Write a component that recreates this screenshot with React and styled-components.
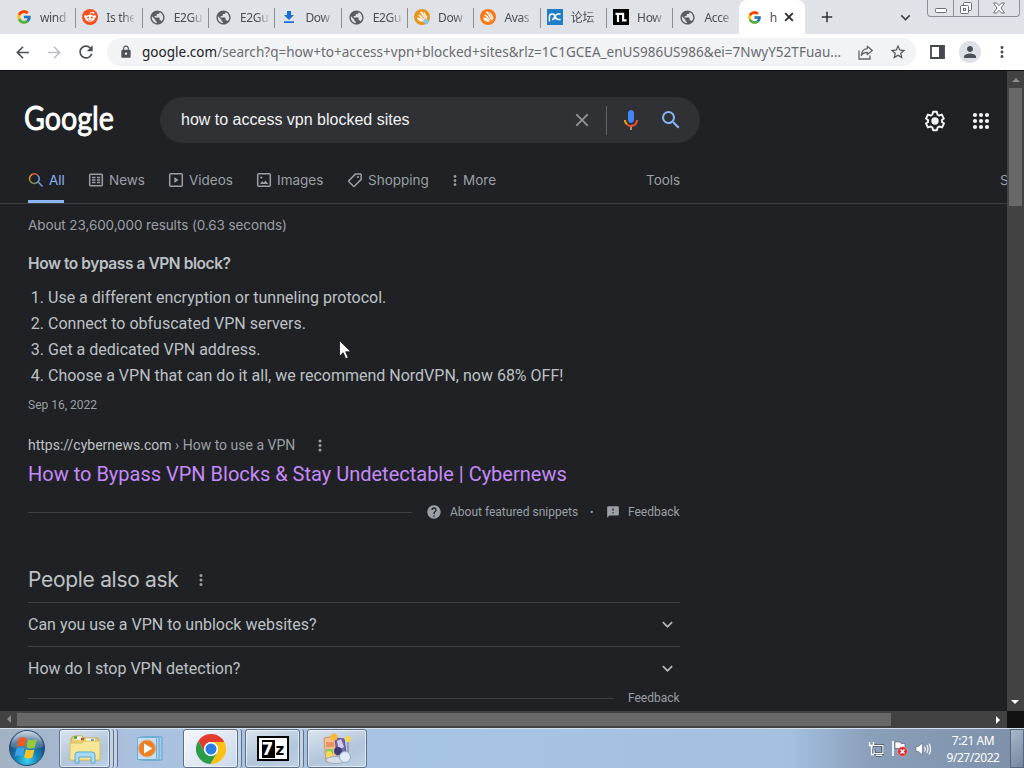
import React from 'react';
import styled, { createGlobalStyle } from 'styled-components';
import { FcGoogle } from 'react-icons/fc';
import {
  MdArrowBack,
  MdArrowForward,
  MdRefresh,
  MdLock,
  MdStarBorder,
  MdPerson,
  MdMoreVert,
  MdPublic,
  MdClose,
  MdAdd,
  MdSearch,
  MdHelp,
  MdFeedback,
  MdKeyboardArrowDown,
} from 'react-icons/md';

const GlobalStyle = createGlobalStyle`
  * {
    box-sizing: border-box;
  }
  body {
    margin: 0;
    overflow: hidden;
    background: #202124;
  }
  svg {
    display: block;
    flex: none;
  }
  h2, h3, p, ol {
    margin: 0;
    padding: 0;
    font-weight: 400;
  }
`;

const segoe = `'Noto Sans', 'Open Sans', 'Noto Sans CJK SC', sans-serif`;
const product = `Inter, Roboto, sans-serif`;

/* ---------- icons ---------- */

const RedditIcon = () => (
  <svg width='16' height='16' viewBox='0 0 16 16'>
    <circle cx='8' cy='8' r='8' fill='#f4511e' />
    <circle cx='3.3' cy='7.6' r='1.3' fill='#fff' />
    <circle cx='12.7' cy='7.6' r='1.3' fill='#fff' />
    <ellipse cx='8' cy='9.2' rx='4.8' ry='3.5' fill='#fff' />
    <path d='M8 6l.7-2.8 2.6.6' fill='none' stroke='#fff' strokeWidth='0.8' />
    <circle cx='11.4' cy='3.8' r='1' fill='#fff' />
    <circle cx='6.1' cy='8.6' r='1' fill='#f4511e' />
    <circle cx='9.9' cy='8.6' r='1' fill='#f4511e' />
    <path d='M6 10.8q2 1.3 4 0' fill='none' stroke='#f4511e' strokeWidth='0.7' />
  </svg>
);

const DownloadIcon = () => (
  <svg width='16' height='16' viewBox='0 0 16 16' fill='#1a6fd6'>
    <path d='M6 2h4v4h3L8 11 3 6h3zM3 12.2h10v1.9H3z' />
  </svg>
);

const AvastIcon = ({ muted }) => (
  <svg width='16' height='16' viewBox='0 0 16 16'>
    <circle cx='8' cy='8' r='8' fill={muted ? '#e8961e' : '#f77a1c'} />
    <path
      d='M6.3 3.2c1.3-.9 2.3.2 2.7 1.5l2.6 6.2c-2-3.2-3.5-5.5-5.3-7.7zM4.6 6.1c1-.5 1.8.2 2.500 1l3.300 4C8 9.800 6 8.200 4.600 6.100zM3.500 8.800c2 .2 4.400 1.500 6.300 3.400-2.600.500-6-.200-6.300-3.400zM10 3.500l2.800 4.200-.5 3.600z'
      fill='#fff'
      stroke='#fff'
      strokeWidth='0.6'
    />
    {muted && <path d='M8.500 13l3-4 4 3.500-2.500 3z' fill='#8fc6e8' />}
  </svg>
);

const ForumIcon = () => (
  <svg width='16' height='16' viewBox='0 0 16 16'>
    <path d='M0 0h16v16H0z' fill='#1e7fc8' />
    <g fill='none' stroke='#fff' strokeWidth='1.500'>
      <path d='M2.400 12.500V7.700a2.700 2.700 0 1 1 2.700 2.700c2.800 0 2.600-5.400 5.800-5.400h2.700' />
      <path d='M13.600 10.400h-2.500a2.700 2.700 0 0 1-2.400-2.700' />
    </g>
  </svg>
);

const NIcon = () => (
  <svg width='16' height='16' viewBox='0 0 16 16'>
    <path d='M0 0h16v16H0z' fill='#000' />
    <path
      d='M2.500 4.900h7.600v6.500h3.400M5 4.900v8'
      fill='none'
      stroke='#fff'
      strokeWidth='2.200'
    />
  </svg>
);

const ShareIcon = () => (
  <svg width='17' height='17' viewBox='0 0 17 17' fill='none' stroke='#5f6368' strokeWidth='1.300'>
    <path d='M2 6.500V15h11v-3.500' />
    <path d='M10.300 2.200l5 4.200-5 4.200V8.300C7.500 8.200 5.600 9.200 4.300 11.300c.3-3.800 2.500-6.300 6-6.700z' strokeLinejoin='round' />
  </svg>
);

const SidePanelIcon = () => (
  <svg width='15' height='14' viewBox='0 0 15 14'>
    <path d='M1 1h13v12H1z' fill='none' stroke='#45484c' strokeWidth='1.800' />
    <path d='M9 1h5v12H9z' fill='#45484c' />
  </svg>
);

const MinimizeIcon = () => (
  <svg width='14' height='12' viewBox='0 0 14 12'>
    <rect x='1.500' y='6.500' width='11' height='4' rx='1' fill='#fff' stroke='#6a7078' />
  </svg>
);

const RestoreIcon = () => (
  <svg width='14' height='13' viewBox='0 0 14 13' fill='#fff' stroke='#6a7078'>
    <rect x='4.500' y='.5' width='8' height='8' rx='1' />
    <rect x='1.500' y='3.500' width='8' height='8' rx='1' />
    <rect x='4.500' y='6.500' width='2' height='2' />
  </svg>
);

const CloseWindowIcon = () => (
  <svg width='14' height='12' viewBox='0 0 14 12'>
    <path
      d='M1.500 1h3L7 3.700 9.500 1h3L9 6l3.500 5h-3L7 8.300 4.500 11h-3L5 6z'
      fill='#fff'
      stroke='#6a7078'
      strokeLinejoin='round'
    />
  </svg>
);

const CloseTabIcon = () => (
  <svg width='14' height='14' viewBox='0 0 14 14'>
    <path d='M3.200 3.200l7.600 7.600M10.800 3.200l-7.600 7.600' stroke='#2c2e31' strokeWidth='1.900' />
  </svg>
);

const MicIcon = () => (
  <svg width='24' height='24' viewBox='0 0 24 24'>
    <path fill='#4285f4' d='m12 15c1.660 0 3-1.310 3-2.970v-7.020c0-1.660-1.340-3.010-3-3.010s-3 1.340-3 3.010v7.020c0 1.660 1.340 2.970 3 2.970z' />
    <path fill='#c9885a' d='m11 18.080h2v3.920h-2z' />
    <path fill='#f4a400' d='m7.050 16.870c-1.270-1.330-2.050-2.830-2.050-4.870h2c0 1.450.56 2.420 1.470 3.380v.32l-1.150 1.180z' />
    <path fill='#ea5335' d='m12 16.930a4.970 5.250 0 0 1-3.540-1.550l-1.410 1.490c1.260 1.340 3.020 2.130 4.950 2.130 3.870 0 6.990-2.920 6.990-7h-1.990c0 2.920-2.240 4.930-5 4.930z' />
  </svg>
);

const GearIcon = () => (
  <svg width='24' height='24' viewBox='0 0 24 24'>
    <path
      transform='translate(.9 .9) scale(.925)'
      d='M19.430 12.980c.04-.32.07-.64.07-.98 0-.34-.03-.66-.07-.98l2.110-1.650-2.120-4.320-3.100 1c-.52-.4-1.080-.73-1.690-.98L14 2h-4l-.87 3.070c-.61.25-1.170.59-1.690.98l-3.100-1-2.120 4.320 2.350 1.650c-.04.32-.07.65-.07.98 0 .33.03.66.07.98l-2.350 1.650 2.120 4.320 3.100-1c.52.4 1.080.73 1.690.98L10 22h4l.87-3.070c.61-.25 1.170-.59 1.690-.98l3.100 1 2.120-4.320z'
      fill='none'
      stroke='#f1f3f4'
      strokeWidth='2.100'
      strokeLinejoin='round'
    />
    <circle cx='12' cy='12' r='3.700' fill='#f1f3f4' />
  </svg>
);

const AppsIcon = () => (
  <svg width='18' height='18' viewBox='0 0 18 18' fill='#f1f3f4'>
    {[3, 9, 15].map((y) =>
      [3, 9, 15].map((x) => <circle key={`${x}-${y}`} cx={x} cy={y} r='2.100' />)
    )}
  </svg>
);

const AllIcon = () => (
  <svg width='16' height='16' viewBox='0 0 16 16' fill='none' strokeWidth='1.500'>
    <path d='M2.200 9.200A4.800 4.800 0 0 1 4 2.500' stroke='#e8912d' />
    <path d='M4 2.500a4.800 4.800 0 0 1 5.800 1' stroke='#d9604c' />
    <path d='M9.800 3.500a4.800 4.800 0 0 1 .2 6.300L14.500 14.500' stroke='#6f9be8' />
    <path d='M10 9.800a4.800 4.800 0 0 1-7.800-.6' stroke='#7d8f62' />
  </svg>
);

const NewsIcon = () => (
  <svg width='16' height='16' viewBox='0 0 16 16' fill='none' stroke='currentColor'>
    <rect x='1.700' y='2.200' width='12.600' height='11.600' rx='1' strokeWidth='1.500' />
    <path d='M4 5.500h3.500M4 8h3.500M4 10.500h3.500M9 5.500h3.200M9 8h3.200M9 10.500h3.200' strokeWidth='1.400' />
  </svg>
);

const VideosIcon = () => (
  <svg width='16' height='16' viewBox='0 0 16 16'>
    <rect x='1.700' y='1.700' width='12.600' height='12.600' rx='1' fill='none' stroke='currentColor' strokeWidth='1.500' />
    <path d='M6.300 5v6l4.200-3z' fill='currentColor' />
  </svg>
);

const ImagesIcon = () => (
  <svg width='16' height='16' viewBox='0 0 16 16'>
    <rect x='1.700' y='1.700' width='12.600' height='12.600' rx='1' fill='none' stroke='currentColor' strokeWidth='1.500' />
    <path d='M4 12l2.200-3 1.500 1.700L9.500 8.500 12.200 12z' fill='currentColor' />
    <circle cx='5.300' cy='5.600' r='1.100' fill='currentColor' />
  </svg>
);

const ShoppingIcon = () => (
  <svg width='16' height='16' viewBox='0 0 16 16'>
    <path
      d='M8.600 1.900h4.700l.9.9v4.600l-6.600 6.600a1 1 0 0 1-1.400 0L2 9.800a1 1 0 0 1 0-1.400z'
      fill='none'
      stroke='currentColor'
      strokeWidth='1.500'
      strokeLinejoin='round'
    />
    <circle cx='11' cy='5' r='1.100' fill='currentColor' />
  </svg>
);

const Dots = ({ size = 12 }) => (
  <svg width='4' height={size} viewBox='0 0 4 12' fill='currentColor'>
    <circle cx='2' cy='1.600' r='1.500' />
    <circle cx='2' cy='6' r='1.500' />
    <circle cx='2' cy='10.400' r='1.500' />
  </svg>
);

const StartOrb = () => (
  <svg width='38' height='38' viewBox='0 0 38 38'>
    <defs>
      <radialGradient id='orb' cx='.5' cy='.85' r='.8'>
        <stop offset='0' stopColor='#37d3f2' />
        <stop offset='.4' stopColor='#1382b4' />
        <stop offset='.75' stopColor='#1c4f80' />
        <stop offset='1' stopColor='#6d8cae' />
      </radialGradient>
      <linearGradient id='gloss' x2='0' y2='1'>
        <stop offset='0' stopColor='#fff' stopOpacity='.6' />
        <stop offset='1' stopColor='#fff' stopOpacity='.1' />
      </linearGradient>
    </defs>
    <circle cx='19' cy='19' r='17.500' fill='url(#orb)' stroke='#2a4a6c' />
    <path d='M3 18a16 16 0 0 1 32 0q-16 5-32 0z' fill='url(#gloss)' />
    <path d='M10.500 9.500q4-2.500 8 0l-1.700 8.500q-4-2.200-8 0z' fill='#ec5b24' />
    <path d='M20 10.200q4 2 9 0l-2.200 8.200q-4 2-8.300 0z' fill='#97c93c' />
    <path d='M8.500 19.500q4-2.200 8 0l-1.800 8.200q-4-2.200-8 0z' fill='#3aa2e6' />
    <path d='M17.900 20.200q4 2 8.500 0l-2 8.200q-4 2-8.300 0z' fill='#fcc52c' />
  </svg>
);

const ExplorerIcon = () => (
  <svg width='34' height='30' viewBox='0 0 34 30'>
    <path d='M3 4l3-2h8l2 2h14l1 4v18H3z' fill='#e5cf74' stroke='#c2a94d' />
    <path d='M6 4h8M18 6h9' stroke='#fff' strokeWidth='3' />
    <path d='M6 3.500h3' stroke='#3f9a45' strokeWidth='2.500' />
    <path d='M13 5h3' stroke='#c8502d' strokeWidth='2.500' />
    <path d='M23 6.500h3' stroke='#3a82bd' strokeWidth='2.500' />
    <path d='M2 9h12l2-2h16v19H2z' fill='#f6e798' stroke='#d6c060' />
    <path d='M7 29V21q0-3 3-3h14q3 0 3 3v8h-4v-6H11v6z' fill='#a5daf0' stroke='#5aa7d0' />
  </svg>
);

const MediaPlayerIcon = () => (
  <svg width='28' height='28' viewBox='0 0 28 28'>
    <path d='M7 2h19v23H7z' fill='#a4cbe6' stroke='#5ea5d0' />
    <path d='M4 2h19v23H4z' fill='#b4d5eb' stroke='#5ea5d0' />
    <path d='M1.500 2.500h19v22h-19z' fill='#c6deee' stroke='#69add4' />
    <circle cx='11' cy='13.500' r='8.500' fill='#ef7f25' stroke='#d8b08c' />
    <path d='M8 8.500v10l8.500-5z' fill='#fff' />
  </svg>
);

const chromePiece = 'M28.270 8A15 15 0 0 0 2.300 7.010L8.940 18.500A7 7 0 0 1 15 8z';

const ChromeIcon = () => (
  <svg width='30' height='30' viewBox='0 0 30 30'>
    <path d={chromePiece} fill='#e33b2e' />
    <path d={chromePiece} fill='#fbc116' transform='rotate(120 15 15)' />
    <path d={chromePiece} fill='#2a9d46' transform='rotate(-120 15 15)' />
    <circle cx='15' cy='15' r='7' fill='#fff' />
    <circle cx='15' cy='15' r='5.500' fill='#2a7de1' />
  </svg>
);

const InstallerIcon = () => (
  <svg width='32' height='32' viewBox='0 0 32 32'>
    <path d='M3 5l12-2 1 24-11 2z' fill='#f3c28c' stroke='#d2956b' />
    <path d='M5 9h8v5H5z' fill='#ef9361' />
    <path d='M5 16h7v5H5z' fill='#8cc56a' />
    <path d='M14 5l9 1 2 14-9 2z' fill='#7467ab' stroke='#5a5095' />
    <path d='M16 8l4-2 3 8-5 3z' fill='#d5cdec' />
    <circle cx='13' cy='4' r='3.500' fill='#f8b73b' />
    <circle cx='27' cy='6' r='3' fill='#f5d44d' />
    <path d='M27 9v10' stroke='#8b929c' strokeWidth='1.500' />
    <circle cx='8' cy='21' r='3' fill='#f6e04c' />
    <ellipse cx='15' cy='27' rx='10' ry='3.500' fill='#d6deea' stroke='#9dabc0' />
    <circle cx='17' cy='18' r='4' fill='#3e3c78' />
    <circle cx='24' cy='24' r='5.500' fill='#e1ecf6' stroke='#93abc4' />
  </svg>
);

const NetworkIcon = () => (
  <svg width='16' height='16' viewBox='0 0 16 16' fill='none'>
    <path d='M5 4.500h10v8H6v-4M8 14.500h6' stroke='#26374c' strokeWidth='3' />
    <path d='M5 4.500h10v8H6v-4M8 14.500h6M1.500 1v3.500h4V1M3.500 4.500v9H6' stroke='#fff' strokeWidth='1.300' />
  </svg>
);

const FlagIcon = () => (
  <svg width='17' height='17' viewBox='0 0 17 17'>
    <path d='M2 1v15' stroke='#fff' strokeWidth='1.700' />
    <path d='M4 2h5l1 1.500h4V10H9L8 8.500H4z' fill='#fff' stroke='#46566b' strokeWidth='.6' />
    <circle cx='11.500' cy='11.500' r='4.800' fill='#d72d32' stroke='#f3b5b6' strokeWidth='.6' />
    <path d='M9.500 9.500l4 4M13.500 9.500l-4 4' stroke='#fff' strokeWidth='1.500' />
  </svg>
);

const SpeakerIcon = () => (
  <svg width='17' height='16' viewBox='0 0 17 16'>
    <path d='M1 5.500h2.500L7.500 2v12l-4-3.500H1z' fill='#fff' stroke='#52647a' strokeWidth='.6' />
    <path d='M9.500 5.500q1.500 2.500 0 5M11.800 4q2.400 4 0 8M14 2.500q3.200 5.500 0 11' fill='none' stroke='#fff' strokeWidth='1.100' />
  </svg>
);

const Cursor = () => (
  <svg width='13' height='20' viewBox='0 0 13 20'>
    <path d='M.5.500v15.700l3.700-3.500 2.500 6 2.500-1-2.500-5.900h5.200z' fill='#fff' stroke='#111' strokeWidth='.8' />
  </svg>
);

/* ---------- data ---------- */

const Globe = () => <MdPublic size={17} color='#5a5e63' />;

const tabs = [
  { icon: <FcGoogle size={16} />, title: 'wind' },
  { icon: <RedditIcon />, title: 'Is the' },
  { icon: <Globe />, title: 'E2Gu' },
  { icon: <Globe />, title: 'E2Gu' },
  { icon: <DownloadIcon />, title: 'Dow' },
  { icon: <Globe />, title: 'E2Gu' },
  { icon: <AvastIcon muted />, title: 'Dow' },
  { icon: <AvastIcon />, title: 'Avas' },
  { icon: <ForumIcon />, title: '论坛' },
  { icon: <NIcon />, title: 'How' },
  { icon: <Globe />, title: 'Acce' },
];

const filters = [
  { icon: <AllIcon />, label: 'All', width: 36, active: true },
  { icon: <NewsIcon />, label: 'News', width: 56 },
  { icon: <VideosIcon />, label: 'Videos', width: 64 },
  { icon: <ImagesIcon />, label: 'Images', width: 67 },
  { icon: <ShoppingIcon />, label: 'Shopping', width: 82 },
];

const steps = [
  'Use a different encryption or tunneling protocol.',
  'Connect to obfuscated VPN servers.',
  'Get a dedicated VPN address.',
  'Choose a VPN that can do it all, we recommend NordVPN, now 68% OFF!',
];

const questions = [
  'Can you use a VPN to unblock websites?',
  'How do I stop VPN detection?',
];

/* ---------- page ---------- */

const App = () => {
  return (
    <Screen>
      <GlobalStyle />
      <TabStrip>
        {tabs.map((tab, i) => (
          <Tab key={i} $last={i === tabs.length - 1}>
            {tab.icon}
            <TabTitle>{tab.title}</TabTitle>
          </Tab>
        ))}
        <ActiveTab>
          <FcGoogle size={15} />
          <TabTitle $narrow>h</TabTitle>
          <CloseTabIcon />
        </ActiveTab>
        <NewTab>
          <MdAdd size={18} color='#2f3236' />
        </NewTab>
        <TabSearch>
          <MdKeyboardArrowDown size={19} color='#3c4043' />
        </TabSearch>
        <WindowControls>
          <WindowButton $width={25}>
            <MinimizeIcon />
          </WindowButton>
          <WindowButton $width={25}>
            <RestoreIcon />
          </WindowButton>
          <WindowButton $width={41}>
            <CloseWindowIcon />
          </WindowButton>
        </WindowControls>
      </TabStrip>

      <Toolbar>
        <NavButton>
          <MdArrowBack size={19} color='#4a4d51' />
        </NavButton>
        <NavButton>
          <MdArrowForward size={19} color='#bcbec1' />
        </NavButton>
        <NavButton>
          <MdRefresh size={20} color='#4a4d51' />
        </NavButton>
        <Omnibox>
          <MdLock size={14} color='#4f5358' />
          <Url>
            <b>google.com</b>
            /search?q=how+to+access+vpn+blocked+sites&amp;rlz=1C1GCEA_enUS986US986&amp;ei=7NwyY52TFuau...
          </Url>
          <ShareIcon />
          <MdStarBorder size={18} color='#4f5358' />
        </Omnibox>
        <ToolbarActions>
          <SidePanelIcon />
          <Avatar>
            <MdPerson size={18} color='#4a4f58' />
          </Avatar>
          <MdMoreVert size={18} color='#4a4d51' />
        </ToolbarActions>
      </Toolbar>

      <Viewport>
        <Page>
          <SearchHeader>
            <Logo width='92' height='34' viewBox='0 0 92 34'>
              <text x='0' y='24' textLength='90' lengthAdjust='spacingAndGlyphs'>
                Google
              </text>
            </Logo>
            <SearchBox>
              <Query>how to access vpn blocked sites</Query>
              <MdClose size={22} color='#8d9094' />
              <Divider />
              <MicIcon />
              <MdSearch size={24} color='#8ab4f8' />
            </SearchBox>
            <HeaderActions>
              <GearIcon />
              <AppsIcon />
            </HeaderActions>
          </SearchHeader>

          <FilterBar>
            {filters.map((item) => (
              <Filter key={item.label} $width={item.width} $active={item.active}>
                {item.icon}
                <span>{item.label}</span>
              </Filter>
            ))}
            <More>
              <Dots size={11} />
              <span>More</span>
            </More>
            <Tools>Tools</Tools>
            <SafeSearch>S</SafeSearch>
          </FilterBar>

          <Results>
            <Stats>About 23,600,000 results (0.63 seconds)</Stats>
            <SnippetTitle>How to bypass a VPN block?</SnippetTitle>
            <Steps>
              {steps.map((step) => (
                <li key={step}>{step}</li>
              ))}
            </Steps>
            <SnippetDate>Sep 16, 2022</SnippetDate>
            <Cite>
              https://cybernews.com<span> › How to use a VPN</span>
              <Dots size={13} />
            </Cite>
            <ResultTitle>
              How to Bypass VPN Blocks &amp; Stay Undetectable | Cybernews
            </ResultTitle>
            <SnippetFooter>
              <Rule />
              <MdHelp size={16} />
              <About>About featured snippets</About>
              <Bullet>•</Bullet>
              <MdFeedback size={14} />
              <Feedback>Feedback</Feedback>
            </SnippetFooter>
            <AskTitle>
              People also ask
              <Dots size={12} />
            </AskTitle>
            {questions.map((question) => (
              <Question key={question}>
                {question}
                <MdKeyboardArrowDown size={21} color='#b4b7bb' />
              </Question>
            ))}
            <AskFooter>
              <Rule />
              <Feedback>Feedback</Feedback>
            </AskFooter>
          </Results>
        </Page>
        <VerticalBar>
          <Arrow $dir='up' />
          <VerticalThumb />
          <Arrow $dir='down' $bright />
        </VerticalBar>
        <HorizontalBar>
          <Arrow $dir='left' />
          <HorizontalThumb />
          <Arrow $dir='right' $bright />
        </HorizontalBar>
        <Corner />
      </Viewport>

      <Taskbar>
        <Start>
          <StartOrb />
        </Start>
        <TaskGroup $width={59}>
          <TaskButton $width={51}>
            <ExplorerIcon />
          </TaskButton>
          <Stack />
          <Stack />
        </TaskGroup>
        <Pinned>
          <MediaPlayerIcon />
        </Pinned>
        <TaskGroup $width={62}>
          <TaskButton $width={55} $active>
            <ChromeIcon />
          </TaskButton>
          <Stack />
        </TaskGroup>
        <TaskGroup $width={62}>
          <TaskButton $width={55}>
            <SevenZip>
              <span>7</span>z
            </SevenZip>
          </TaskButton>
          <Stack />
        </TaskGroup>
        <TaskGroup $width={60}>
          <TaskButton $width={60}>
            <InstallerIcon />
          </TaskButton>
        </TaskGroup>
        <Tray>
          <NetworkIcon />
          <FlagIcon />
          <SpeakerIcon />
        </Tray>
        <Clock>
          <span>7:21 AM</span>
          <span>9/27/2022</span>
        </Clock>
        <ShowDesktop />
      </Taskbar>

      <Pointer>
        <Cursor />
      </Pointer>
    </Screen>
  );
};

/* ---------- browser chrome ---------- */

const Screen = styled.div`
  position: relative;
  width: 1024px;
  height: 768px;
  display: flex;
  flex-direction: column;
  overflow: hidden;
  background: #202124;
`;

const TabStrip = styled.div`
  height: 34px;
  display: flex;
  padding-left: 10px;
  background: #dfe2e6;
  font: 12px/17px ${segoe};
  color: #4a4d51;
`;

const Tab = styled.div`
  width: 66.35px;
  flex: none;
  display: flex;
  align-items: center;
  position: relative;
  padding: 0 6px 0 6px;
  gap: 8px;
  &::after {
    content: '';
    position: absolute;
    right: 0;
    top: 8px;
    width: 1px;
    height: 20px;
    background: ${({ $last }) => ($last ? 'transparent' : '#8b8e92')};
  }
`;

const TabTitle = styled.span`
  width: ${({ $narrow }) => ($narrow ? '8px' : '28px')};
  flex: none;
  white-space: nowrap;
  letter-spacing: -0.35px;
  mask-image: ${({ $narrow }) =>
    $narrow ? 'none' : 'linear-gradient(90deg, #000 60%, #0003)'};
`;

const ActiveTab = styled.div`
  width: 66px;
  margin-left: -1px;
  flex: none;
  display: flex;
  align-items: center;
  padding-left: 8px;
  gap: 8px;
  border-radius: 8px 8px 0 0;
  background: #fff;
  & > svg:last-child {
    margin-left: -4px;
  }
`;

const NewTab = styled.div`
  width: 44px;
  display: grid;
  place-items: center;
`;

const TabSearch = styled.div`
  margin-left: auto;
  margin-right: 12px;
  display: grid;
  place-items: center;
`;

const WindowControls = styled.div`
  width: 93px;
  height: 17px;
  margin-right: 4px;
  display: flex;
  border: 1px solid #8b9097;
  border-top: 0;
  border-radius: 0 0 4px 4px;
`;

const WindowButton = styled.div`
  width: ${({ $width }) => $width}px;
  display: grid;
  place-items: center;
  & + & {
    border-left: 1px solid #8b9097;
  }
`;

const Toolbar = styled.div`
  height: 37px;
  display: flex;
  align-items: center;
  padding-left: 6px;
  background: #fff;
  border-bottom: 1px solid #101113;
`;

const NavButton = styled.div`
  width: 32px;
  display: grid;
  place-items: center;
`;

const Omnibox = styled.div`
  width: 809px;
  height: 28px;
  margin-left: 5px;
  display: flex;
  align-items: center;
  padding-left: 12px;
  border-radius: 14px;
  background: #f2f3f5;
`;

const Url = styled.div`
  width: 715px;
  flex: none;
  margin-left: 9px;
  white-space: nowrap;
  font: 13.5px/20px ${segoe};
  letter-spacing: 0.03px;
  color: #696c70;
  b {
    font-weight: 400;
    color: #202124;
  }
  & + svg {
    margin-right: 15px;
  }
`;

const ToolbarActions = styled.div`
  flex: 1;
  display: flex;
  align-items: center;
  padding-left: 14px;
  gap: 14px;
  & > svg:last-child {
    margin-left: -2px;
  }
`;

const Avatar = styled.div`
  width: 22px;
  height: 22px;
  display: grid;
  place-items: center;
  border-radius: 50%;
  background: #dde0e6;
`;

/* ---------- search page ---------- */

const Viewport = styled.div`
  height: 657px;
  display: grid;
  grid-template: 640px 17px / 1007px 17px;
`;

const Page = styled.main`
  overflow: hidden;
  background: #202124;
  font-family: Roboto, sans-serif;
`;

const SearchHeader = styled.header`
  height: 86px;
  display: flex;
  align-items: center;
  padding: 12px 16px 0 24px;
`;

const Logo = styled.svg`
  margin-top: 6px;
  overflow: visible;
  font: 400 32px Lato, sans-serif;
  fill: #fff;
  stroke: #fff;
  stroke-width: 0.8px;
`;

const SearchBox = styled.div`
  width: 540px;
  height: 46px;
  margin-left: 44px;
  display: flex;
  align-items: center;
  padding: 0 17px 0 21px;
  border-radius: 23px;
  background: #303134;
`;

const Query = styled.span`
  width: 390px;
  font: 16px/20px 'Liberation Sans', Arial, sans-serif;
  color: #f1f3f4;
`;

const Divider = styled.i`
  width: 1px;
  height: 29px;
  margin: 0 12px 0 13px;
  background: #5f6368;
  & + svg {
    margin-right: 16px;
  }
`;

const HeaderActions = styled.div`
  margin-left: auto;
  display: flex;
  align-items: center;
  gap: 25px;
  padding: 2px 1px 0 0;
`;

const FilterBar = styled.nav`
  height: 47px;
  display: flex;
  padding-left: 28px;
  border-bottom: 1px solid #3c4043;
  font: 13.5px/20px ${product};
  color: #9aa0a6;
`;

const Filter = styled.div`
  width: ${({ $width }) => $width}px;
  margin-right: 24px;
  flex: none;
  height: 46px;
  padding-top: 3px;
  display: flex;
  align-items: center;
  gap: 5px;
  white-space: nowrap;
  color: ${({ $active }) => ($active ? '#8ab4f8' : '#9aa0a6')};
  border-bottom: 3px solid ${({ $active }) => ($active ? '#8ab4f8' : 'transparent')};
`;

const More = styled(Filter)`
  width: 193px;
  margin-right: 0;
  gap: 6px;
`;

const Tools = styled(Filter)`
  width: 354px;
  margin-right: 0;
`;

const SafeSearch = styled(Filter)`
  width: auto;
  margin-right: 0;
`;

const Results = styled.section`
  width: 652px;
  margin-left: 28px;
  color: #bdc1c6;
`;

const Stats = styled.p`
  padding-top: 11px;
  font: 13.5px/20px ${product};
  letter-spacing: -0.09px;
  color: #9aa0a6;
`;

const SnippetTitle = styled.h2`
  padding-top: 17px;
  font: 600 15.5px/24px ${product};
  letter-spacing: -0.43px;
`;

const Steps = styled.ol`
  margin-top: 9px;
  padding-left: 20px;
  font-size: 16px;
  line-height: 26px;
`;

const SnippetDate = styled.p`
  padding-top: 7px;
  font-size: 12px;
  line-height: 18px;
  color: #9aa0a6;
`;

const Cite = styled.p`
  height: 22px;
  margin-top: 20px;
  display: flex;
  align-items: center;
  white-space: pre;
  font-size: 14px;
  span {
    color: #9aa0a6;
  }
  svg {
    margin-left: 23px;
    color: #9aa0a6;
  }
`;

const ResultTitle = styled.h3`
  padding-top: 4px;
  font-size: 20px;
  line-height: 28px;
  color: #c58af9;
`;

const Rule = styled.i`
  flex: 1;
  height: 1px;
  background: #3c4043;
`;

const SnippetFooter = styled.div`
  height: 20px;
  margin-top: 14px;
  display: flex;
  align-items: center;
  font-size: 12px;
  color: #9aa0a6;
  ${Rule} {
    margin-right: 14px;
  }
`;

const About = styled.span`
  width: 129px;
  margin-left: 8px;
  white-space: nowrap;
`;

const Bullet = styled.span`
  width: 27px;
  padding-left: 11px;
  font-size: 10px;
`;

const Feedback = styled.span`
  width: 52px;
  margin-left: 8px;
  white-space: nowrap;
  font-size: 12px;
  color: #9aa0a6;
`;

const AskTitle = styled.h2`
  height: 80px;
  padding-top: 35px;
  display: flex;
  align-items: center;
  font: 21px/28px ${product};
  letter-spacing: -0.3px;
  svg {
    margin-left: 20px;
    color: #9aa0a6;
  }
`;

const Question = styled.div`
  height: 44px;
  display: flex;
  align-items: center;
  justify-content: space-between;
  padding-right: 2px;
  border-top: 1px solid #3c4043;
  font-size: 16px;
`;

const AskFooter = styled.div`
  height: 16px;
  display: flex;
  align-items: center;
  ${Rule} {
    margin-right: 6px;
  }
`;

/* ---------- scrollbars ---------- */

const rotations = { up: 0, right: 90, down: 180, left: 270 };

const VerticalBar = styled.div`
  display: flex;
  flex-direction: column;
  align-items: center;
  justify-content: space-between;
  background: #424242;
`;

const VerticalThumb = styled.div`
  width: 13px;
  height: 118px;
  margin-bottom: auto;
  background: #686868;
`;

const HorizontalBar = styled.div`
  display: flex;
  align-items: center;
  background: #424242;
`;

const HorizontalThumb = styled.div`
  width: 874px;
  height: 13px;
  margin-right: auto;
  background: #686868;
`;

const Arrow = styled.i`
  width: 17px;
  height: 17px;
  display: grid;
  place-items: center;
  transform: rotate(${({ $dir }) => rotations[$dir]}deg);
  &::before {
    content: '';
    border: 4px solid transparent;
    border-top: 0;
    border-bottom-color: ${({ $bright }) => ($bright ? '#fff' : '#8a8a8a')};
  }
`;

const Corner = styled.div`
  background: #121212;
`;

/* ---------- taskbar ---------- */

const Taskbar = styled.footer`
  height: 40px;
  display: flex;
  border-top: 1px solid #d3dfec;
  background: linear-gradient(
    90deg,
    #a3b1c3 0,
    #a9c1de 130px,
    #a6c4e4 420px,
    #a3c0df 790px,
    #8a9fba 870px,
    #7e90a8 100%
  );
`;

const Start = styled.div`
  width: 59px;
  padding-left: 8px;
`;

const TaskGroup = styled.div`
  width: ${({ $width }) => $width}px;
  display: flex;
`;

const TaskButton = styled.div`
  width: ${({ $width }) => $width}px;
  height: 39px;
  display: grid;
  place-items: center;
  border: 1px solid #5d7087;
  border-radius: 3px;
  box-shadow: inset 0 0 0 1px #ffffff90;
  background: ${({ $active }) =>
    $active
      ? 'linear-gradient(135deg, #f4f7fb, #cbd9ea)'
      : 'linear-gradient(160deg, #dae3ed, #b1c5db 60%, #bed0e4)'};
`;

const Stack = styled.i`
  width: 4px;
  height: 39px;
  border-right: 1px solid #5d7087;
  border-radius: 0 3px 3px 0;
  background: #c3d2e4;
`;

const Pinned = styled.div`
  width: 65px;
  padding: 6px 0 0 18px;
`;

const SevenZip = styled.div`
  width: 32px;
  height: 25px;
  display: flex;
  align-items: flex-end;
  padding: 2px 2px 1px 3px;
  border: 2px solid #000;
  background: #fff;
  font: bold 15px/15px 'DejaVu Sans', sans-serif;
  color: #000;
  span {
    width: 13px;
    height: 18px;
    margin-right: 1px;
    background: #000;
    font-size: 17px;
    line-height: 18px;
    color: #fff;
  }
`;

const Tray = styled.div`
  margin-left: auto;
  display: flex;
  align-items: center;
  gap: 7px;
`;

const Clock = styled.div`
  width: 78px;
  padding: 3px 0 0 4px;
  display: flex;
  flex-direction: column;
  align-items: center;
  font: 12px/17px ${segoe};
  letter-spacing: -0.45px;
  color: #fff;
`;

const ShowDesktop = styled.div`
  width: 14px;
  border: 1px solid #56677d;
  background: linear-gradient(135deg, #a9b8ca, #74879f);
`;

const Pointer = styled.div`
  position: absolute;
  left: 339px;
  top: 340px;
`;

export default App;
